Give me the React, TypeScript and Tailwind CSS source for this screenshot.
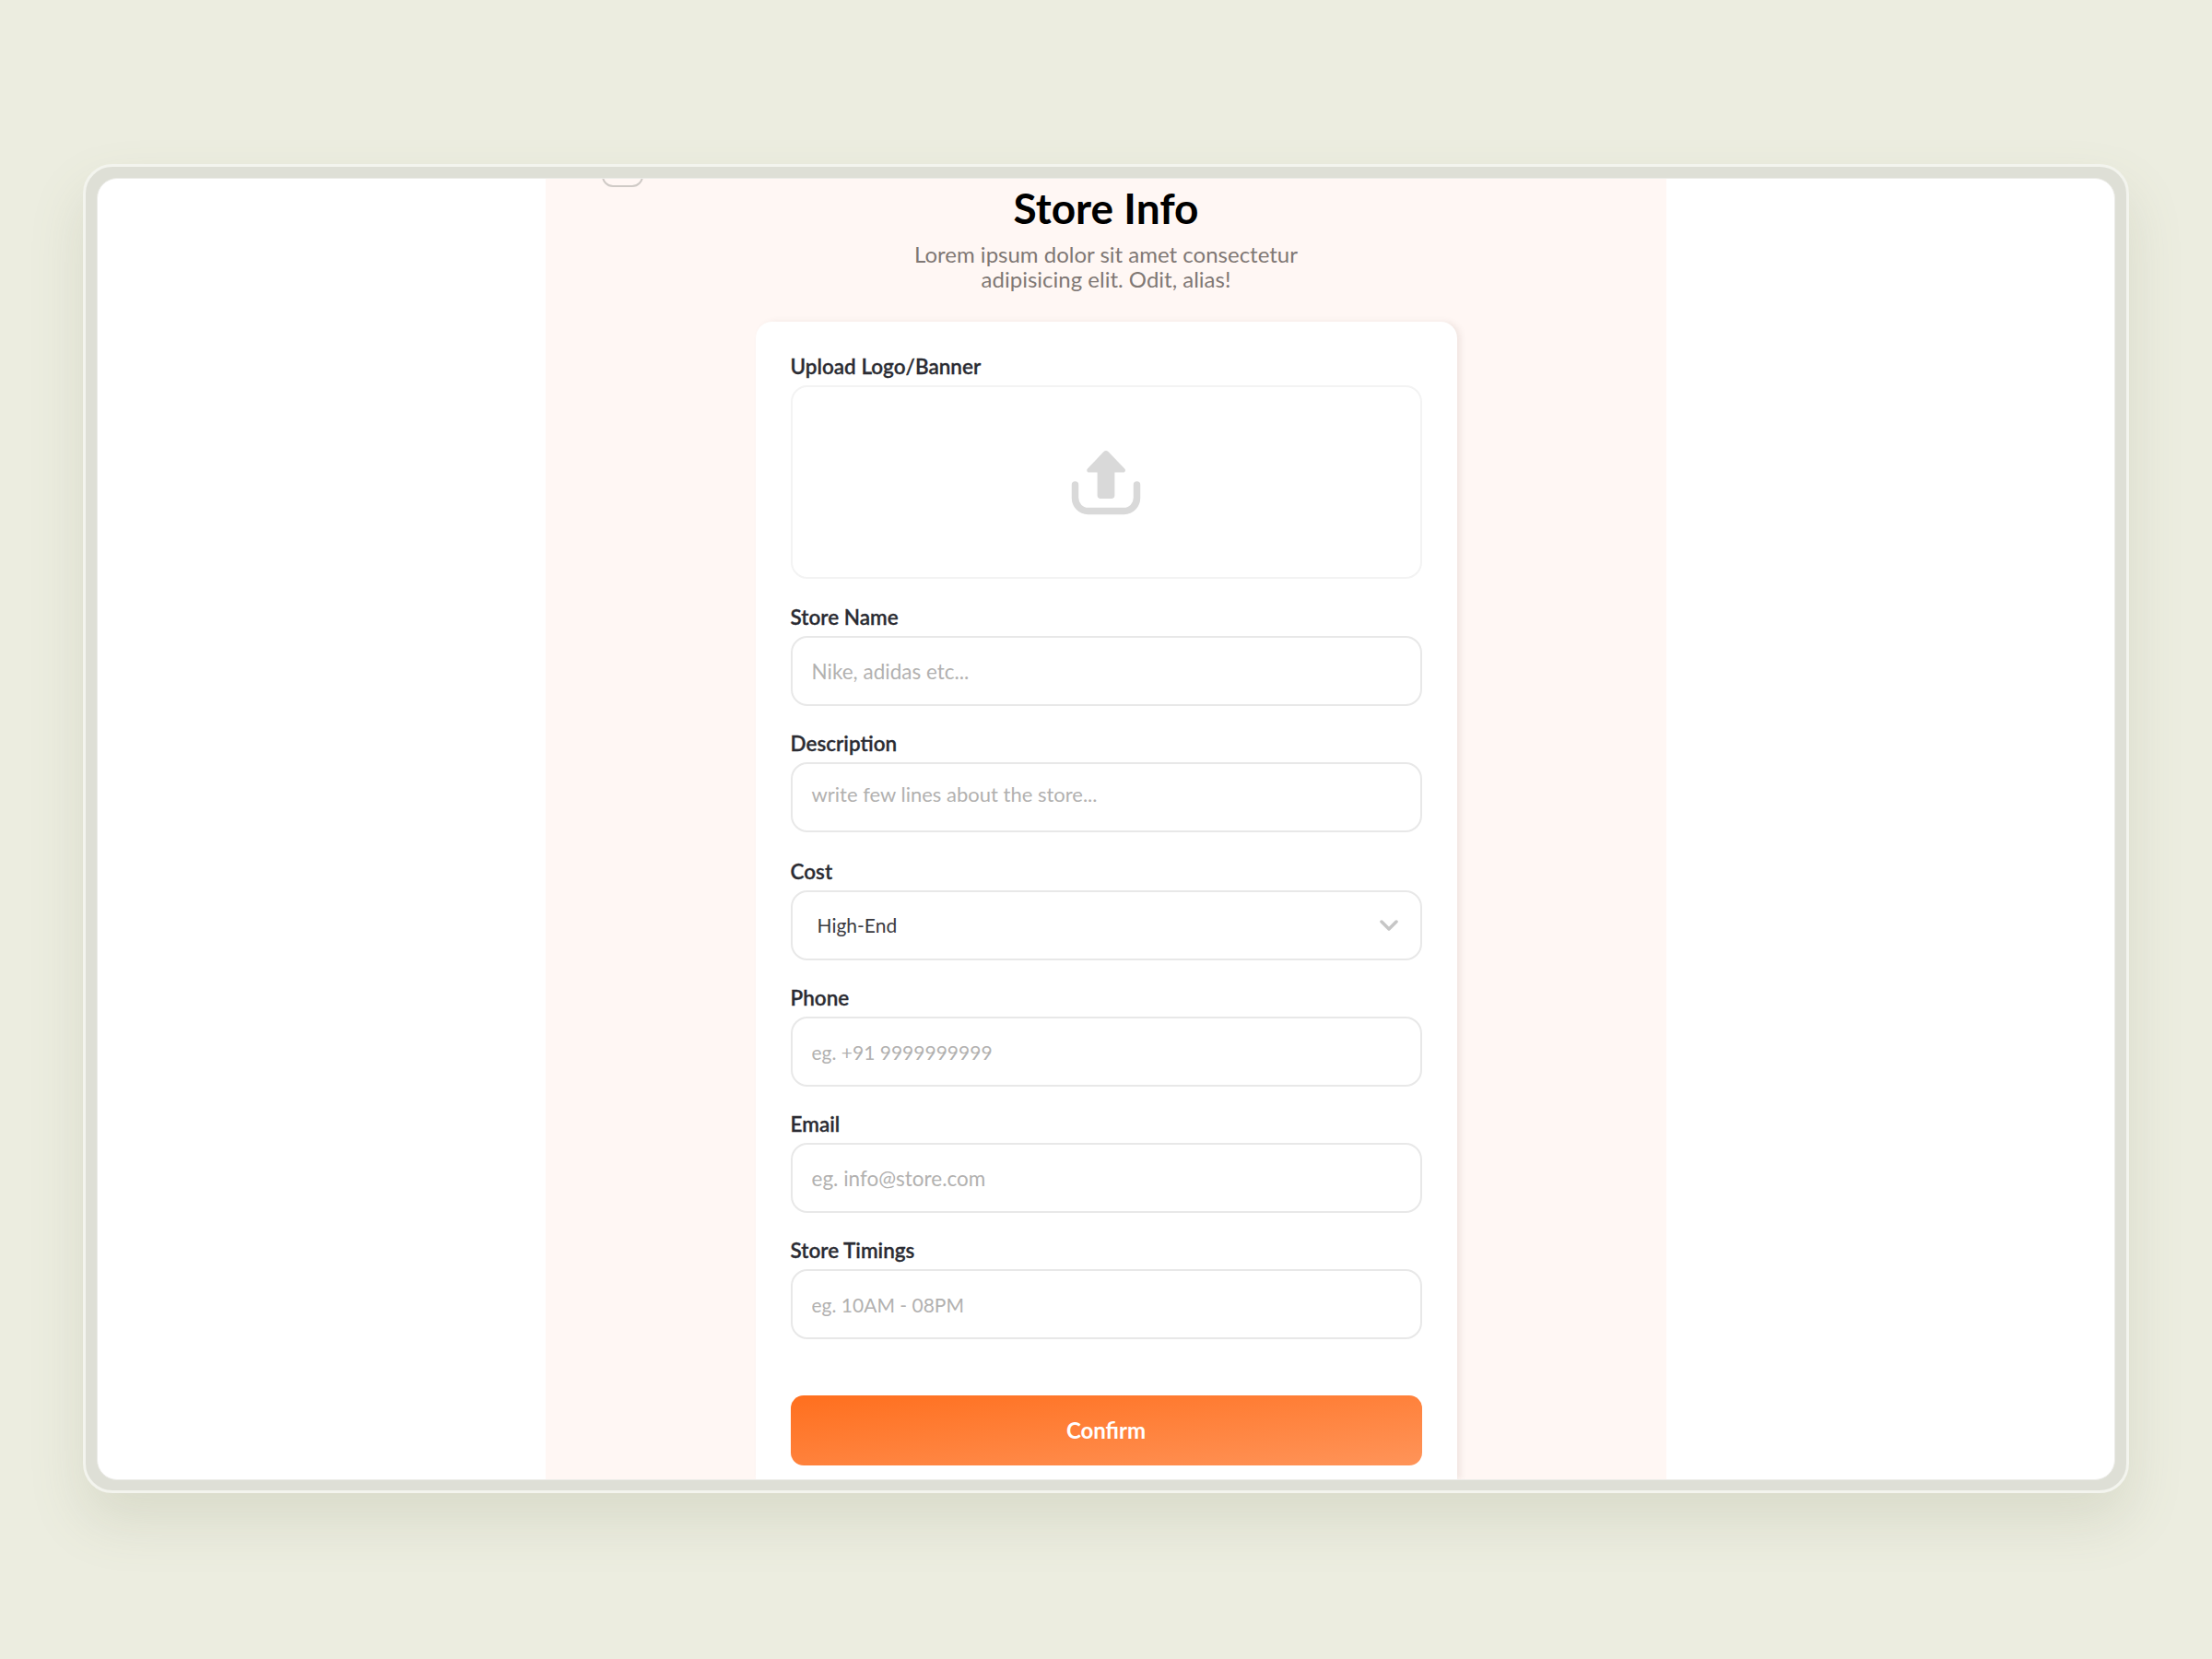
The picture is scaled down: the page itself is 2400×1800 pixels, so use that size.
const font = 'font-["Lato","Noto_Sans",sans-serif]';

function Label({ children }: { children: React.ReactNode }) {
  return <label className="block h-[21px] mb-[10px] text-[22.5px] leading-[21px] font-semibold text-[#2b2c33] [-webkit-text-stroke:0.3px_#2b2c33]">{children}</label>;
}

function TextField({ label, placeholder, small }: { label: string; placeholder: string; small?: boolean }) {
  return (
    <div>
      <Label>{label}</Label>
      <input
        placeholder={placeholder}
        className={`block w-full h-[76px] px-[21px] rounded-[18px] border-2 border-[#e8e8e8] bg-white outline-none placeholder:text-[#b2b1b0] ${small ? 'text-[21px]' : 'text-[22.5px]'}`}
      />
    </div>
  );
}

function UploadIcon() {
  return (
    <svg className="mt-[2px]" width="76" height="70" viewBox="0 0 76 70" fill="none">
      <path
        d="M35.6 1 18 19.4c-1.5 1.6-.6 4.2 1.8 4.2h8.8v25c0 2 1.4 3.4 3.4 3.4h12c2 0 3.4-1.4 3.4-3.4v-25h9c2.4 0 3.3-2.6 1.8-4.2L40.400 1c-1.300-1.300-3.500-1.300-4.800 0Z"
        fill="#d9d9d9"
      />
      <path
        d="M4.500 37v14c0 8 6 14.500 14 14.500h39c8 0 14-6.500 14-14.500V37"
        stroke="#d9d9d9"
        strokeWidth="7.500"
        strokeLinecap="round"
      />
    </svg>
  );
}

export default function App() {
  return (
    <div className={`w-[2400px] h-[1800px] bg-[#ecede0] px-[90px] pt-[178px] ${font}`}>
      {/* device frame */}
      <div className="h-[1442px] rounded-[32px] border-[3px] border-[#f3f4ee] bg-[#dedfd6] px-[12px] pt-[12px] pb-[11px] shadow-[0_30px_60px_rgba(120,122,90,0.16)]">
        <div className="h-full rounded-[22px] border border-[#ecece8] bg-white overflow-hidden flex justify-center">
          <main className="relative w-[1216px] h-full bg-[#fff7f4] flex flex-col items-center overflow-hidden">
            {/* back button, scrolled out of view */}
            <div className="absolute left-[61px] top-[-34px] w-[45px] h-[43px] rounded-[12px] border-2 border-[#cfcac6]" />

            <h1 className="mt-[4px] h-[56px] text-[46px] leading-[56px] font-bold text-black">Store Info</h1>
            <p className="mt-[8px] w-[480px] text-center text-[24px] leading-[27px] text-[#7f7874]">
              Lorem ipsum dolor sit amet consectetur adipisicing elit. Odit, alias!
            </p>

            <form className="mt-[33px] w-[761px] flex-1 rounded-t-[18px] bg-white px-[38px] pt-[38px] shadow-[4px_0_6px_rgba(120,90,80,0.1)] flex flex-col">
              <div>
                <Label>Upload Logo/Banner</Label>
                <div className="h-[210px] rounded-[18px] border-2 border-[#f3f3f3] flex items-center justify-center">
                  <UploadIcon />
                </div>
              </div>

              <div className="mt-[31px] flex flex-col gap-[30px]">
                <TextField label="Store Name" placeholder="Nike, adidas etc..." />
                <div>
                  <Label>Description</Label>
                  <textarea
                    rows={1}
                    placeholder="write few lines about the store..."
                    className="block w-full h-[76px] px-[21px] pt-[20px] resize-none rounded-[18px] border-2 border-[#e8e8e8] bg-white text-[22px] leading-[26px] outline-none placeholder:text-[#b2b1b0]"
                  />
                </div>
                <div className="mt-[2px]">
                  <Label>Cost</Label>
                  <div className="h-[76px] pl-[27px] pr-[24px] rounded-[18px] border-2 border-[#e8e8e8] flex items-center justify-between text-[21px] text-[#3a3a3f]">
                    <span>High-End</span>
                    <svg width="20" height="12" viewBox="0 0 20 12" fill="none">
                      <path d="M2 2l8 8 8-8" stroke="#c6c6c6" strokeWidth="3.500" strokeLinecap="round" strokeLinejoin="round" />
                    </svg>
                  </div>
                </div>
                <TextField label="Phone" placeholder="eg. +91 9999999999" small />
                <TextField label="Email" placeholder="eg. info@store.com" />
                <TextField label="Store Timings" placeholder="eg. 10AM - 08PM" small />
              </div>

              <button
                type="button"
                className="mt-[61px] h-[76px] shrink-0 rounded-[14px] bg-[linear-gradient(to_bottom_right,#ff6f1e,#ff9459)] text-[24px] font-bold text-white"
              >
                Confirm
              </button>
            </form>
          </main>
        </div>
      </div>
    </div>
  );
}
